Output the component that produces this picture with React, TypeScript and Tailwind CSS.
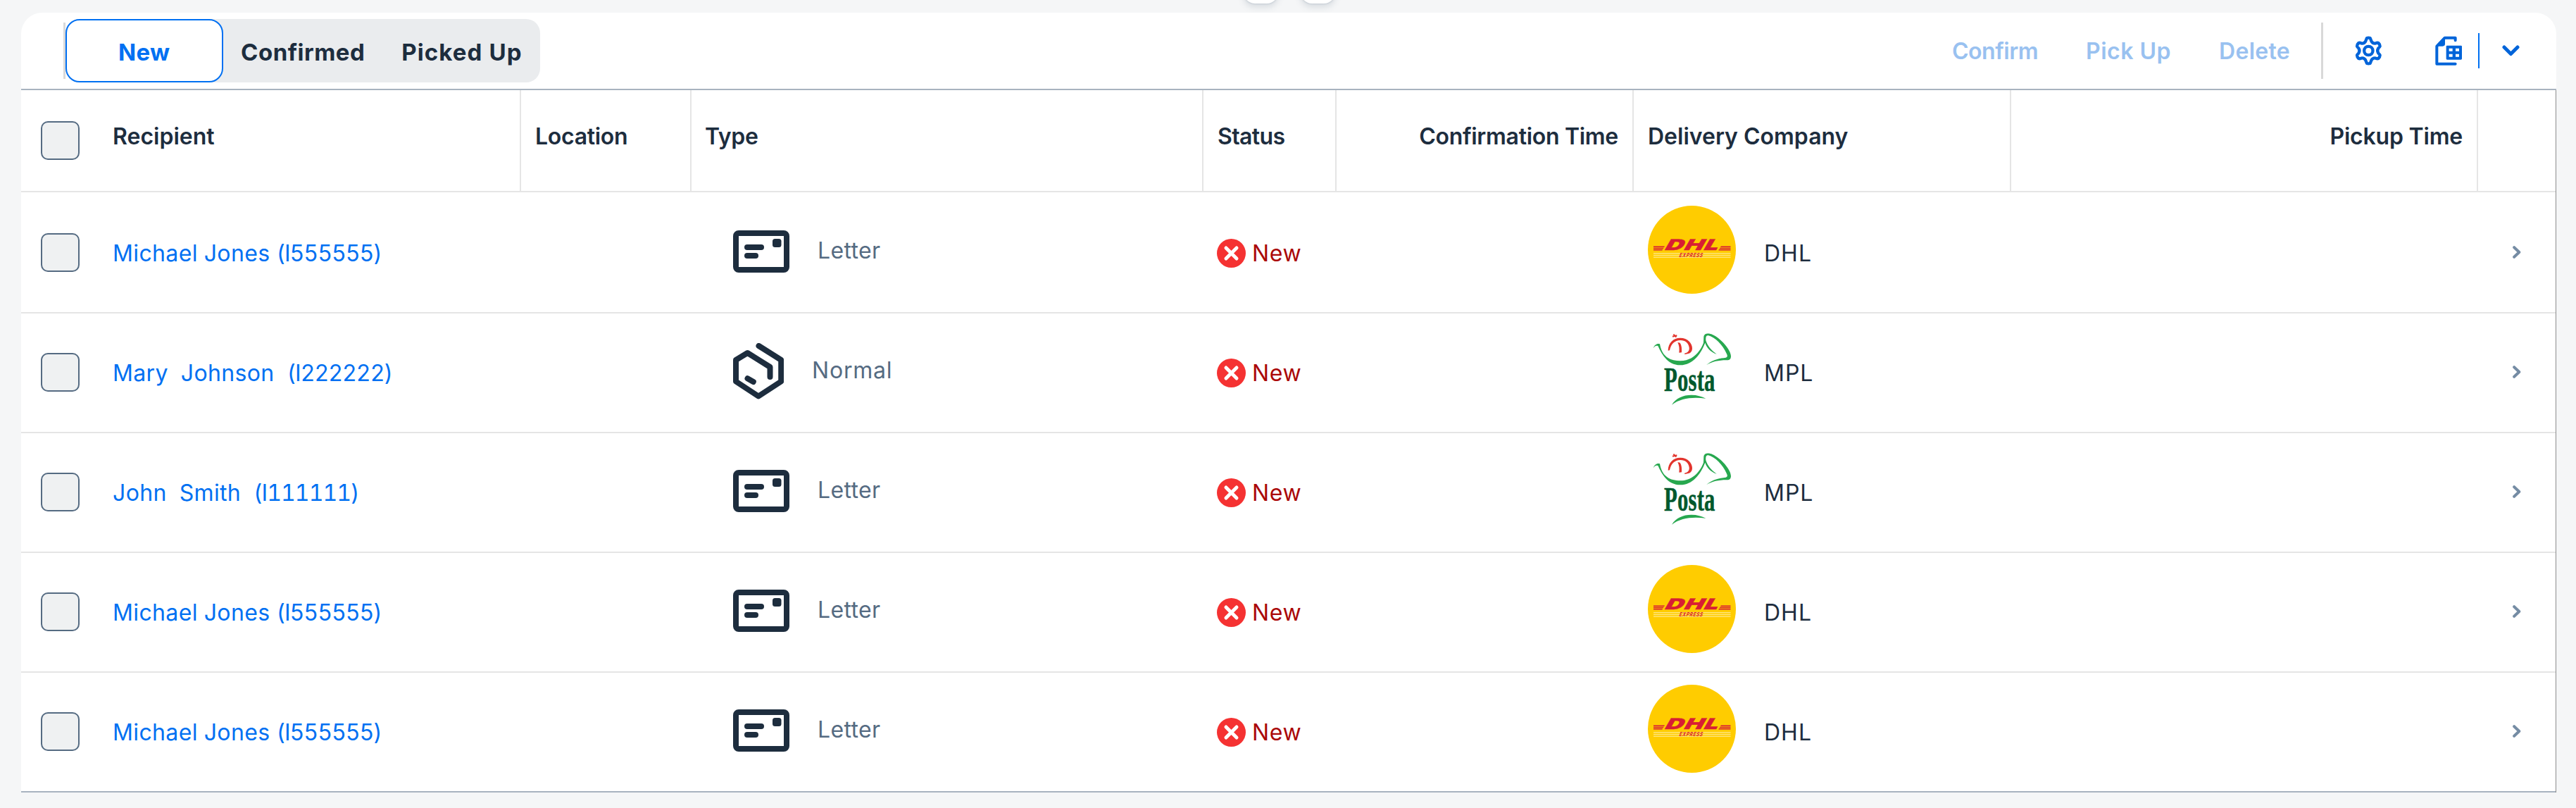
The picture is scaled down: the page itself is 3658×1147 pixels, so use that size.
import type { ReactNode } from "react";

type Kind = "Letter" | "Normal";
type Company = "DHL" | "MPL";

const rows: { name: string; id: string; type: Kind; company: Company }[] = [
  { name: "Michael Jones ", id: "(I555555)", type: "Letter", company: "DHL" },
  { name: "Mary\u00a0 Johnson\u00a0 ", id: "(I222222)", type: "Normal", company: "MPL" },
  { name: "John\u00a0 Smith\u00a0 ", id: "(I111111)", type: "Letter", company: "MPL" },
  { name: "Michael Jones ", id: "(I555555)", type: "Letter", company: "DHL" },
  { name: "Michael Jones ", id: "(I555555)", type: "Letter", company: "DHL" },
];

const grid = "grid grid-cols-[110px_600px_242px_727px_189px_422px_536px_663px_110px]";

function LetterIcon() {
  return (
    <svg viewBox="0 0 80 60" className="h-[60px] w-[80px] shrink-0" fill="#1d2d3e">
      <rect x="4" y="4" width="72" height="52" rx="4" fill="none" stroke="#1d2d3e" strokeWidth="8" />
      <rect x="16" y="20" width="28" height="8" rx="4" />
      <rect x="16" y="32" width="20" height="8" rx="4" />
      <rect x="56" y="12" width="12.5" height="12" rx="3.5" />
    </svg>
  );
}

function BoxIcon() {
  return (
    <svg viewBox="0 0 72 80" className="h-[80px] w-[72px] shrink-0" fill="none" stroke="#1d2d3e" strokeWidth="8" strokeLinecap="round" strokeLinejoin="round">
      <path d="M36.5 4 68.2 24V54.5L36 75.5 4 54.5V24L20.5 14 52.5 34V48" />
      <path d="M20.5 50.2 28.8 55" />
    </svg>
  );
}

function ErrorIcon() {
  return (
    <svg viewBox="0 0 41 41" className="h-[41px] w-[41px] shrink-0">
      <circle cx="20.5" cy="20.5" r="20.5" fill="#f53232" />
      <path d="M13 13 28 28M28 13 13 28" stroke="#fff" strokeWidth="5" strokeLinecap="round" />
    </svg>
  );
}

function DhlLogo() {
  return (
    <svg viewBox="0 0 125 125" className="h-[125px] w-[125px] shrink-0">
      <circle cx="62.5" cy="62.5" r="62.5" fill="#fc0" />
      <g fill="#ffe680">
        <rect x="8" y="67" width="109.5" height="1.3" />
        <rect x="8" y="69.8" width="109.5" height="1.3" />
        <rect x="8" y="72.6" width="109.5" height="1.3" />
      </g>
      <g fill="#d81e34">
        <path d="M8 57.4H24L23.1 58.9H8ZM8 59.7H22.6L21.7 61.2H8ZM8 62H21.2L20.3 63.4H8Z" />
        <path d="M103.9 57.4H117.5V58.9H103ZM102.5 59.7H117.5V61.2H101.6ZM101.1 62H117.5V63.4H100.2Z" />
        <text transform="translate(22.5 63.3) skewX(-30)" fontFamily="Inter, sans-serif" fontWeight="900" fontSize="21.5" stroke="#d81e34" strokeWidth=".5" textLength="77" lengthAdjust="spacingAndGlyphs">DHL</text>
        <text transform="translate(44 73.4) skewX(-18)" fontFamily="Inter, sans-serif" fontWeight="700" fontSize="8.3" textLength="34" lengthAdjust="spacingAndGlyphs">EXPRESS</text>
      </g>
    </svg>
  );
}

function PostaLogo() {
  return (
    <svg viewBox="120 66 375 375" className="h-[125px] w-[125px] shrink-0 overflow-visible">
      <path fill="#27a84f" d="M143 163C148 148 160 141 171 145C180 200 215 217 258 217C305 217 340 185 357 140L358 115C360 98 380 98 395 105C430 120 475 170 474 198C473 212 466 214 455 214C420 214 395 220 370 234C395 212 425 206 452 203C460 200 460 195 455 185C440 150 405 115 378 109C368 108 366 115 367 130C375 155 390 172 413 188C385 178 370 160 364 140C345 190 310 235 258 235C205 235 180 190 163 153C155 150 148 155 143 163Z" />
      <g fill="#e2342d">
        <path d="M206 173C207 140 228 119 258 119C290 119 309 142 309 163C309 180 300 187 278 189L275 186C290 182 298 175 296 160C293 140 280 129 258 129C235 129 218 145 213 172Z" />
        <path d="M247 138 257 140C264 150 265 165 264 181L253 182C255 165 254 152 247 138Z" />
        <path d="M225 113 244 109M229 104 241 116" stroke="#e2342d" strokeWidth="6" />
      </g>
      <text x="189" y="344" fill="#00582d" stroke="#00582d" strokeWidth="1.5" fontFamily="'Liberation Serif', serif" fontWeight="700" fontSize="146" textLength="218" lengthAdjust="spacingAndGlyphs">Posta</text>
      <path fill="#27a84f" d="M222 404C240 375 270 362 305 362C330 362 350 368 367 377C310 370 260 375 222 404Z" />
    </svg>
  );
}

function GearIcon() {
  return (
    <svg viewBox="190 94 117 126" className="h-[42px] w-[39px] shrink-0" fill="none" stroke="#0064d9" strokeWidth="13" strokeLinejoin="round">
      <path d="M241 103Q248 101 255 103L261 118Q268 128 279 125Q286 122 290 124Q297 130 297 138Q296 141 290 146Q283 157 290 168Q296 173 297 176Q297 184 290 190Q286 192 279 189Q268 186 261 196L255 211Q248 213 241 211L235 196Q228 186 217 189Q210 192 206 190Q199 184 199 176Q200 173 206 168Q213 157 206 146Q200 141 199 138Q199 130 206 124Q210 122 217 125Q228 128 235 118Z" />
      <circle cx="248" cy="157" r="18.5" />
    </svg>
  );
}

function ExportIcon() {
  return (
    <svg viewBox="531 94 117 126" className="h-[42px] w-[39px] shrink-0">
      <path d="M617 113V102H572L538 138V213H617" fill="none" stroke="#0064d9" strokeWidth="12" strokeLinecap="round" strokeLinejoin="round" />
      <path d="M573 100V128Q573 138 563 138H536Z" fill="#0064d9" />
      <path fill="#0064d9" fillRule="evenodd" d="M582 135H641Q645 135 645 139V191Q645 195 641 195H582Q578 195 578 191V139Q578 135 582 135ZM590 147V159H605V147ZM618 147V159H633V147ZM590 171V183H605V171ZM618 171V183H633V171Z" />
    </svg>
  );
}

function Checkbox() {
  return <div className="ml-[28px] h-[55px] w-[55px] rounded-[10px] border-2 border-[#556b82] bg-[#eff1f2]" />;
}

function Head({ children, className = "" }: { children?: ReactNode; className?: string }) {
  return <div className={`flex items-center border-r-2 border-[#e5e5e5] px-5 pb-[11px] ${className}`}>{children}</div>;
}

export default function App() {
  return (
    <div className="h-[1147px] w-[3658px] overflow-hidden bg-[#f5f6f7] font-['Inter',sans-serif] text-[32px] leading-10 whitespace-nowrap text-[#1d2d3e]">
      <div className="flex h-[18px] items-end gap-[32px] overflow-hidden pb-[13px] pl-[1766px]">
        <div className="h-[50px] w-[49px] shrink-0 rounded-[16px] bg-white shadow-[0_0_2px_1px_rgba(85,107,130,0.16),0_5px_10px_rgba(85,107,130,0.18)]" />
        <div className="h-[50px] w-[49px] shrink-0 rounded-[16px] bg-white shadow-[0_0_2px_1px_rgba(85,107,130,0.16),0_5px_10px_rgba(85,107,130,0.18)]" />
      </div>
      <main className="ml-[30px] w-[3600px]">
        <header className="flex h-[110px] items-center rounded-t-[30px] border-b-2 border-[#a8b3bf] bg-white">
          <div className="ml-[60px] h-[80px] w-[3px] bg-[#d9d9d9]" />
          <div className="flex h-[90px] w-[674px] rounded-[20px] bg-[#eaecee] text-[33px] font-bold">
            <div className="flex h-[90px] w-[224px] items-center rounded-[20px] border-2 border-[#0070f2] bg-white pt-[4px] pl-[73px] tracking-[0.3px] text-[#0070f2]">New</div>
            <div className="flex items-center pt-[4px] pl-[25px] tracking-[0.5px]">Confirmed</div>
            <div className="flex items-center pt-[4px] pl-[52px] tracking-[1.1px]">Picked Up</div>
          </div>
          <div className="ml-auto flex items-center text-[#99c1f0] font-semibold">
            <div className="w-[190px] pt-[1px] tracking-[-0.5px]">Confirm</div>
            <div className="w-[189px] pt-[1px] tracking-[0.5px]">Pick Up</div>
            <div className="w-[145px] pt-[1px] tracking-[0.3px]">Delete</div>
            <div className="h-[80px] w-[3px] bg-[#d9d9d9]" />
            <div className="ml-[45px]"><GearIcon /></div>
            <div className="ml-[75px]"><ExportIcon /></div>
            <div className="ml-[22px] h-[50px] w-[2px] bg-[#0070f2]" />
            <svg viewBox="0 0 25 16" className="mr-[52px] ml-[32px] h-[16px] w-[25px]" fill="none" stroke="#0064d9" strokeWidth="5" strokeLinecap="round" strokeLinejoin="round">
              <path d="M3 3 12.5 12.5 22 3" />
            </svg>
          </div>
        </header>

        <section className="border-r border-[#8c8c8c] bg-white">
          <div className={`${grid} h-[145px] border-b-2 border-[#e5e5e5] font-semibold`}>
            <div className="flex items-center"><Checkbox /></div>
            <Head>Recipient</Head>
            <Head className="tracking-[-0.3px]">Location</Head>
            <Head className="-ml-px tracking-[-0.3px]">Type</Head>
            <Head className="tracking-[-0.6px]">Status</Head>
            <Head className="justify-end tracking-[-0.3px]">Confirmation Time</Head>
            <Head>Delivery Company</Head>
            <Head className="justify-end tracking-[-0.2px]">Pickup Time</Head>
            <div />
          </div>
          <div className="pt-[2px]">
            {rows.map((r, i) => (
              <div key={i} className={`${grid} h-[170px] border-b-2 ${i === rows.length - 1 ? "border-[#a8b3bf]" : "border-[#e5e5e5]"}`}>
                <div className="flex items-center pb-[1px]"><Checkbox /></div>
                <div className="flex items-center pt-[1px] pl-5 text-[#0070f2]">
                  <span className="whitespace-pre tracking-[0.36px] tabular-nums">
                    {r.name}
                    <span className="tracking-[-0.95px]">{r.id}</span>
                  </span>
                </div>
                <div />
                <div className="flex items-center gap-[40px] pb-[4px] pl-[59px] text-[#556b82]">
                  {r.type === "Letter" ? <LetterIcon /> : <BoxIcon />}
                  <span className={r.type === "Letter" ? "pb-[2px] tracking-[0.35px]" : "pb-[2px] tracking-[0.8px]"}>{r.type}</span>
                </div>
                <div className="flex items-center gap-[9px] pt-[1px] pl-[19px] tracking-[0.7px] text-[#aa0808]">
                  <ErrorIcon />
                  New
                </div>
                <div />
                <div className="flex items-center gap-[40px] pl-5 tracking-[1px]">
                  <div className="pb-[9px]">{r.company === "DHL" ? <DhlLogo /> : <PostaLogo />}</div>
                  <span className="pt-[2px]">{r.company}</span>
                </div>
                <div />
                <div className="flex items-center pb-[2px] pl-[49px]">
                  <svg viewBox="0 0 12 18" className="h-[18px] w-[12px]" fill="none" stroke="#758ca4" strokeWidth="4" strokeLinecap="round" strokeLinejoin="round">
                    <path d="M2.2 2.2 9.3 9 2.2 15.8" />
                  </svg>
                </div>
              </div>
            ))}
          </div>
        </section>
      </main>
    </div>
  );
}
